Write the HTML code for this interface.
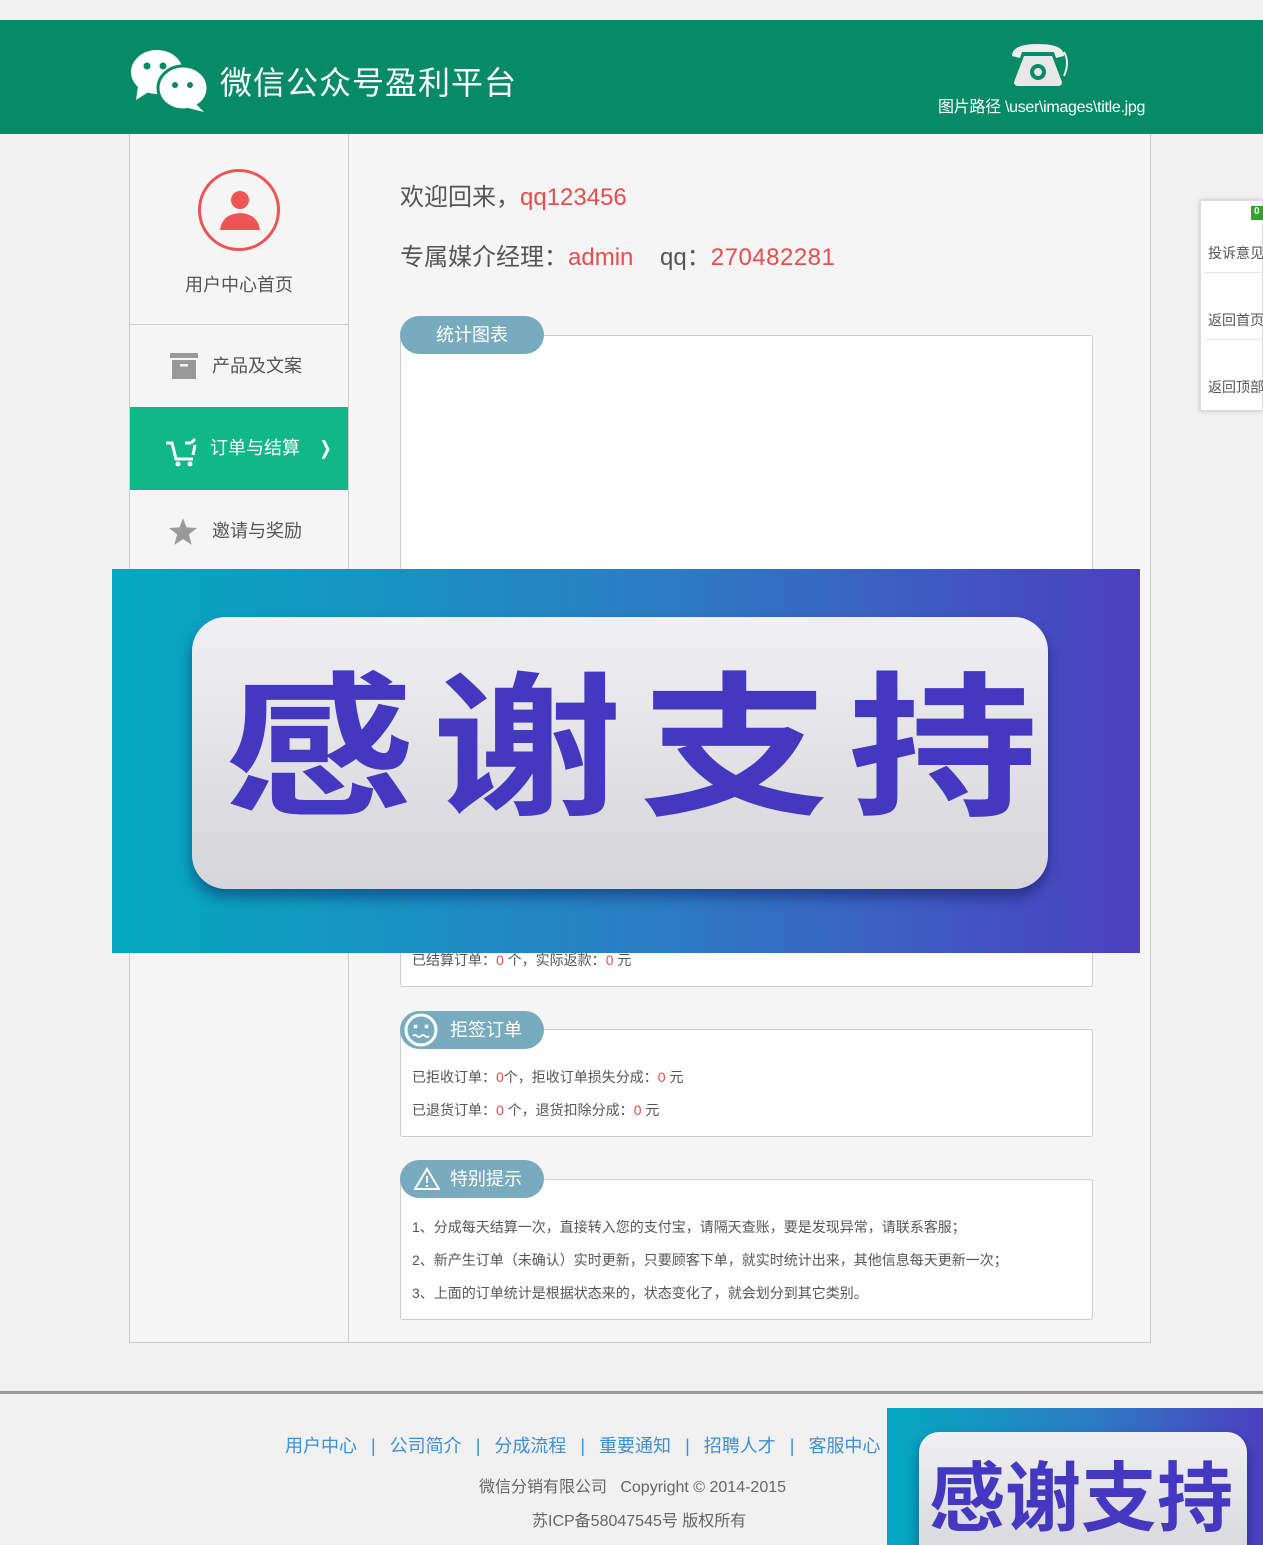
<!DOCTYPE html>
<html><head><meta charset="utf-8"><style>
*{margin:0;padding:0;box-sizing:border-box}
body{width:1263px;height:1545px;background:#f1f1f1;font-family:"Liberation Sans","Noto Sans CJK SC",sans-serif;position:relative;overflow:hidden;color:#555}
.a{position:absolute}
.hdr{left:0;top:20px;width:1263px;height:114px;background:#078b66}
.wrap{left:129px;top:134px;width:1022px;height:1209px;background:#f5f5f5;border:1px solid #ccc;border-top:none}
.side{left:129px;top:134px;width:220px;height:1209px;border-right:1px solid #ccc}
.nav{left:130px;width:218px;height:82px;font-size:18px;color:#555;line-height:82px}
.tab{height:38px;border-radius:19px;background:#78abbd;color:#fff;font-size:18px;line-height:38px}
.box{background:#fff;border:1px solid #ccc;border-radius:3px;left:400px;width:693px}
.t{font-size:14px;color:#555;left:412px}
.r{color:#e84c4c}
.ban{background:linear-gradient(90deg,#03a9c0,#2d7bc4 55%,#4c3fc0);overflow:hidden}
.pill{background:linear-gradient(180deg,#f0f0f2,#d5d5da);border-radius:34px;box-shadow:0 8px 14px rgba(0,0,60,.4);color:#4438c0;font-weight:bold;font-family:"Noto Sans CJK SC",sans-serif;text-align:center;white-space:nowrap}
.fl{font-size:18px;color:#3d8fd6}
.fl b{font-weight:normal;margin:0 14px}
</style></head><body>
<div class="a hdr"></div>
<svg class="a" style="left:130px;top:48px" width="80" height="66" viewBox="0 0 80 66">
<ellipse cx="27" cy="24" rx="26" ry="22" fill="#fff"/><path d="M8 38 L6 52 L20 43Z" fill="#fff"/>
<circle cx="17" cy="18" r="3.5" fill="#078b66"/><circle cx="33" cy="18" r="3.5" fill="#078b66"/>
<ellipse cx="53" cy="40" rx="25" ry="22" fill="#fff" stroke="#078b66" stroke-width="3"/><path d="M66 56 L74 64 L58 60Z" fill="#fff"/>
<circle cx="45" cy="37" r="3" fill="#078b66"/><circle cx="60" cy="37" r="3" fill="#078b66"/></svg>
<div class="a" style="left:220px;top:58px;font-size:32px;color:#fff;letter-spacing:1px">微信公众号盈利平台</div>
<svg class="a" style="left:1008px;top:42px" width="62" height="46" viewBox="0 0 62 46">
<path d="M4 14 Q4 2 30 2 Q56 2 56 14 L48 16 L46 10 L14 10 L12 16Z" fill="#eee"/>
<path d="M16 14 L44 14 L54 40 Q54 44 50 44 L10 44 Q6 44 6 40Z" fill="#e8e8e8"/>
<circle cx="30" cy="30" r="8" fill="#078b66"/><circle cx="30" cy="30" r="4" fill="#e8e8e8"/>
<path d="M56 10 Q62 20 56 34" stroke="#eee" stroke-width="2" fill="none"/></svg>
<div class="a" style="left:938px;top:93px;font-size:16px;color:#fff;letter-spacing:-0.3px">图片路径 \user\images\title.jpg</div>

<div class="a wrap"></div>
<div class="a side"></div>
<div class="a" style="left:198px;top:169px;width:82px;height:82px;border:3px solid #f05353;border-radius:50%"></div>
<svg class="a" style="left:218px;top:186px" width="44" height="44" viewBox="0 0 44 44"><circle cx="22" cy="14" r="9" fill="#f05353"/><path d="M2 44 Q4 28 22 27 Q40 28 42 44Z" fill="#f05353"/></svg>
<div class="a" style="left:130px;width:218px;top:271px;text-align:center;font-size:18px;color:#555">用户中心首页</div>
<div class="a" style="left:130px;top:324px;width:218px;height:1px;background:#ccc"></div>
<div class="a nav" style="top:325px;padding-left:82px">产品及文案</div>
<svg class="a" style="left:170px;top:353px" width="28" height="26"><rect x="0" y="0" width="28" height="5" fill="#999"/><rect x="2" y="7" width="24" height="19" fill="#999"/><rect x="10" y="11" width="8" height="2.5" fill="#f5f5f5"/></svg>
<div class="a nav" style="top:407px;height:83px;background:#10b887;color:#fff;padding-left:80px">订单与结算<span style="margin-left:18px;font-weight:bold">❭</span></div>
<svg class="a" style="left:165px;top:437px" width="34" height="30" viewBox="0 0 34 30"><path d="M1 6 L7 6 L11 22 L28 22" stroke="#fff" stroke-width="3" fill="none"/><path d="M20 6 L26 6 M26 6 L30 2 M30 8 L28 18" stroke="#fff" stroke-width="3" fill="none"/><circle cx="13" cy="27" r="2.5" fill="#fff"/><circle cx="25" cy="27" r="2.5" fill="#fff"/></svg>
<div class="a nav" style="top:490px;padding-left:82px">邀请与奖励</div>
<svg class="a" style="left:169px;top:518px" width="28" height="27" viewBox="0 0 24 23"><path d="M12 0 L15 8 L24 8.5 L17 14 L19.5 23 L12 18 L4.5 23 L7 14 L0 8.5 L9 8Z" fill="#999"/></svg>

<div class="a" style="left:400px;top:177px;font-size:24px">欢迎回来，<span class="r">qq123456</span></div>
<div class="a" style="left:400px;top:237px;font-size:24px">专属媒介经理：<span class="r">admin</span>&nbsp;&nbsp;&nbsp; qq：<span class="r" style="letter-spacing:0.5px">270482281</span></div>

<div class="a box" style="top:335px;height:652px"></div>
<div class="a tab" style="left:400px;top:316px;width:144px;text-align:center">统计图表</div>
<div class="a t" style="top:950px">已结算订单：<span class="r">0</span> 个，实际返款：<span class="r">0</span> 元</div>

<div class="a box" style="top:1029px;height:108px"></div>
<div class="a tab" style="left:400px;top:1011px;width:144px;padding-left:50px">拒签订单</div>
<svg class="a" style="left:403px;top:1012px" width="36" height="36" viewBox="0 0 36 36"><circle cx="18" cy="18" r="15" stroke="#fff" stroke-width="3" fill="none"/><path d="M11 13l3 3M14 13l-3 3M22 13l3 3M25 13l-3 3M10 24q2-2 4 0q2 2 4 0q2-2 4 0q2 2 4 0" stroke="#fff" stroke-width="1.8" fill="none"/></svg>
<div class="a t" style="top:1067px">已拒收订单：<span class="r">0</span>个，拒收订单损失分成：<span class="r">0</span> 元</div>
<div class="a t" style="top:1100px">已退货订单：<span class="r">0</span> 个，退货扣除分成：<span class="r">0</span> 元</div>

<div class="a box" style="top:1179px;height:141px"></div>
<div class="a tab" style="left:400px;top:1160px;width:144px;padding-left:50px">特别提示</div>
<svg class="a" style="left:414px;top:1167px" width="26" height="24"><path d="M13 2 L25 22 L1 22Z" stroke="#fff" stroke-width="2" fill="none"/><path d="M13 9 V16 M13 18 V20" stroke="#fff" stroke-width="2"/></svg>
<div class="a t" style="top:1217px">1、分成每天结算一次，直接转入您的支付宝，请隔天查账，要是发现异常，请联系客服；</div>
<div class="a t" style="top:1250px">2、新产生订单（未确认）实时更新，只要顾客下单，就实时统计出来，其他信息每天更新一次；</div>
<div class="a t" style="top:1283px">3、上面的订单统计是根据状态来的，状态变化了，就会划分到其它类别。</div>

<div class="a" style="left:1200px;top:200px;width:63px;height:211px;background:#fff;border:1px solid #ddd;box-shadow:0 0 4px #bbb"></div>
<div class="a" style="left:1251px;top:206px;width:12px;height:14px;background:#2ea62e;color:#fff;font-size:10px;font-weight:bold;padding-left:3px">0</div>
<div class="a" style="left:1208px;top:243px;font-size:14px;color:#555;white-space:nowrap">投诉意见</div>
<div class="a" style="left:1205px;top:272px;width:58px;height:1px;background:#e5e5e5"></div>
<div class="a" style="left:1208px;top:310px;font-size:14px;color:#555;white-space:nowrap">返回首页</div>
<div class="a" style="left:1205px;top:339px;width:58px;height:1px;background:#e5e5e5"></div>
<div class="a" style="left:1208px;top:377px;font-size:14px;color:#555;white-space:nowrap">返回顶部</div>

<div class="a ban" style="left:112px;top:569px;width:1028px;height:384px">
<div class="a pill" style="left:80px;top:48px;width:856px;height:272px"></div>
<div class="a" style="left:112px;top:33px;width:856px;height:272px;color:#4438c0;font-weight:bold;font-family:'Noto Sans CJK SC',sans-serif;font-size:190px;line-height:272px;letter-spacing:18px;white-space:nowrap;transform:scaleY(0.82);transform-origin:0 45%">感谢支持</div></div>

<div class="a" style="left:0;top:1391px;width:1263px;height:3px;background:#999"></div>
<div class="a fl" style="left:285px;top:1432px;white-space:nowrap">用户中心<b>|</b>公司简介<b>|</b>分成流程<b>|</b>重要通知<b>|</b>招聘人才<b>|</b>客服中心</div>
<div class="a" style="left:479px;top:1473px;font-size:16px;color:#666">微信分销有限公司 &nbsp; Copyright © 2014-2015</div>
<div class="a" style="left:532px;top:1507px;font-size:16px;color:#666">苏ICP备58047545号 版权所有</div>

<div class="a ban" style="left:887px;top:1408px;width:376px;height:137px">
<div class="a pill" style="left:32px;top:24px;width:328px;height:140px;border-radius:20px"></div>
<div class="a" style="left:42px;top:34px;color:#4438c0;font-weight:bold;font-family:'Noto Sans CJK SC',sans-serif;font-size:76px;line-height:100px;white-space:nowrap">感谢支持</div></div>
</body></html>
